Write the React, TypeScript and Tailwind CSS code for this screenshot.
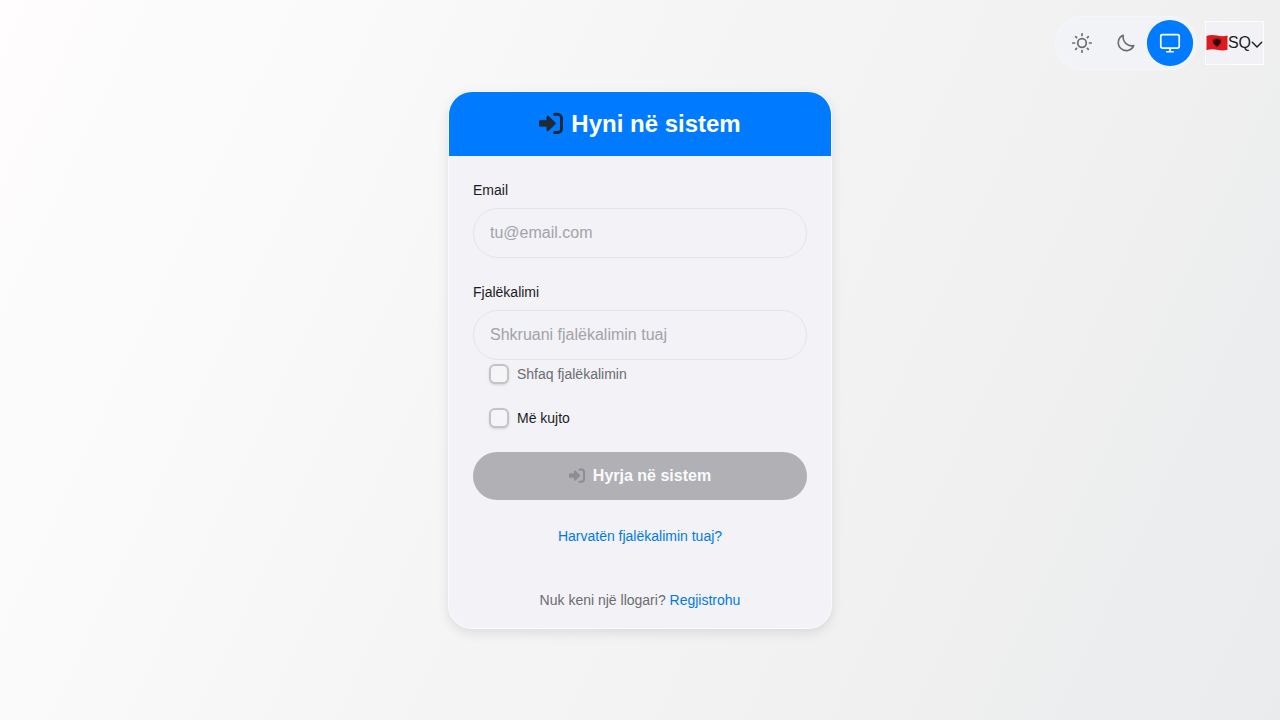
import { useState } from "react";
import type { InputHTMLAttributes } from "react";

function SignInIcon({ className }: { className: string }) {
  return (
    <svg viewBox="0 0 24 24" className={className} fill="none" aria-hidden="true">
      <path d="M15.600 2.300h2.900a4 4 0 0 1 4 4v10.200a4 4 0 0 1-4 4h-2.900" stroke="currentColor" strokeWidth="3" strokeLinecap="round" />
      <path
        d="M1.400 8.300h6.300V5.200c0-1.200 1.200-1.700 2-.9l6.500 6.300c.500.500.500 1.200 0 1.700l-6.500 6.300c-.8.800-2 .3-2-.9v-3.100H1.400c-.7 0-1.300-.6-1.300-1.300V9.600c0-.7.6-1.300 1.300-1.300z"
        fill="currentColor"
        stroke="currentColor"
        strokeWidth=".3"
      />
    </svg>
  );
}

function SunIcon() {
  return (
    <svg viewBox="0 0 24 24" className="size-6" fill="none" stroke="currentColor" strokeWidth="1.7" strokeLinecap="round" aria-hidden="true">
      <circle cx="12" cy="12" r="4.3" />
      <path d="M12 2.8v1.700M12 19.500v1.700M2.800 12h1.700M19.500 12h1.700M5.700 5.700l.9.900M17.400 17.400l.9.900M5.700 18.300l.9-.9M17.400 6.600l.9-.9" />
    </svg>
  );
}

function MoonIcon() {
  return (
    <svg viewBox="0 0 24 24" className="size-6" fill="none" stroke="currentColor" strokeWidth="1.6" strokeLinejoin="round" aria-hidden="true">
      <path d="M9.200 4.200A8 8 0 1 0 19.700 14.600C14 16 8.400 11.500 9.200 4.200z" />
    </svg>
  );
}

function MonitorIcon() {
  return (
    <svg viewBox="0 0 24 24" className="size-6" fill="none" stroke="currentColor" strokeWidth="1.6" strokeLinecap="round" strokeLinejoin="round" aria-hidden="true">
      <rect x="3.2" y="4" width="17.6" height="12.8" rx="1.6" />
      <path d="M12 17v3.300M9 20.300h6" />
    </svg>
  );
}

function ChevronIcon() {
  return (
    <svg viewBox="0 0 12 12" className="mt-1 size-3" fill="none" stroke="currentColor" strokeWidth="1.4" strokeLinecap="round" strokeLinejoin="round" aria-hidden="true">
      <path d="M1.300 3.300 6 8l4.700-4.700" />
    </svg>
  );
}

function AlbanianFlag() {
  return (
    <svg viewBox="0 0 22 18" className="h-[18px] w-[22px]" aria-hidden="true">
      <path d="M.5 2C4 .6 7.500.7 11 1.500s7 .900 10.500 0v14.200c-3.500 1-7 .8-10.500 0s-7-.800-10.500.500z" fill="#dc1a20" />
      <path d="M11 5.500 10.200 4.200 9 4.600l.7.900-.4.500L7.200 5l.2 1.600-.7.200.7 1-.5.500.8.700-.3.800.9.200-.1 1 1.200-.6-.1 1.500 1-.4.700 2.200.7-2.200 1 .4-.1-1.500 1.200.6-.1-1 .900-.2-.3-.8.800-.7-.5-.5.700-1-.7-.2.200-1.600-2.100 1-.4-.5.700-.9-1.200-.4z" fill="#2a0709" />
    </svg>
  );
}

const themes = [
  { id: "light", label: "Light", Icon: SunIcon },
  { id: "dark", label: "Dark", Icon: MoonIcon },
  { id: "system", label: "System", Icon: MonitorIcon },
];

function Toolbar() {
  const [theme, setTheme] = useState("system");
  return (
    <header className="flex items-center justify-end gap-2 px-4 pt-4">
      <div className="flex items-center rounded-full border border-white/30 bg-[#f2f3f8]/70 p-1">
        {themes.map(({ id, label, Icon }) => (
          <button
            key={id}
            type="button"
            aria-label={label}
            aria-pressed={theme === id}
            onClick={() => setTheme(id)}
            className={
              theme === id
                ? "flex size-11 scale-105 items-center justify-center rounded-full bg-[#007aff] text-white"
                : "flex size-11 items-center justify-center rounded-full text-[#6c6c70]"
            }
          >
            <Icon />
          </button>
        ))}
      </div>
      <button type="button" className="flex h-11 items-center border border-white/80 bg-[#f2f2f7]/80 text-base text-[#1c1c1e]">
        <AlbanianFlag />
        <span>SQ</span>
        <ChevronIcon />
      </button>
    </header>
  );
}

type FieldProps = InputHTMLAttributes<HTMLInputElement> & { id: string; label: string };

function Field({ id, label, ...rest }: FieldProps) {
  return (
    <div className="flex flex-col gap-2">
      <label htmlFor={id} className="text-sm text-[#1c1c1e]">
        {label}
      </label>
      <input
        id={id}
        className="h-[50px] w-full rounded-full border border-[#e3e3e8] bg-transparent px-4 text-base text-[#1c1c1e] outline-none placeholder:text-[#a3a3a8] focus:border-[#007aff]"
        {...rest}
      />
    </div>
  );
}

type CheckProps = { id: string; label: string; muted?: boolean; checked: boolean; onChange: (value: boolean) => void };

function Check({ id, label, muted, checked, onChange }: CheckProps) {
  return (
    <div className="flex items-center gap-2 pl-4">
      <input
        id={id}
        type="checkbox"
        checked={checked}
        onChange={(e) => onChange(e.target.checked)}
        className="size-5 appearance-none rounded-md border-2 border-[#c4c4c6] bg-[#f5f5f7] shadow-sm checked:border-[#007aff] checked:bg-[#007aff]"
      />
      <label htmlFor={id} className={muted ? "text-sm text-[#6c6c70]" : "text-sm text-[#1c1c1e]"}>
        {label}
      </label>
    </div>
  );
}

export default function App() {
  const [visible, setVisible] = useState(false);
  const [remember, setRemember] = useState(false);
  return (
    <div className="flex min-h-screen flex-col bg-linear-[115deg,#fffdfd_0%,#f9f9f9_25%,#f4f4f4_50%,#f0f0f0_75%,#e9ebed_100%] font-['Liberation_Sans',Arial,sans-serif]">
      <Toolbar />
      <main className="flex justify-center px-4 pt-[21px] pb-8">
        <section className="w-full max-w-96 overflow-hidden rounded-3xl border border-white/70 bg-[#f2f2f7] shadow-[0_4px_12px_rgba(0,0,0,0.1)]">
          <h1 className="flex h-16 items-center justify-center gap-2 bg-[#007aff] text-2xl font-bold text-white">
            <SignInIcon className="size-6 text-[#1f2a37]" />
            Hyni në sistem
          </h1>
          <form className="px-6 pt-6" onSubmit={(e) => e.preventDefault()}>
            <Field id="email" label="Email" type="email" placeholder="tu@email.com" />
            <div className="mt-6">
              <Field id="password" label="Fjalëkalimi" type={visible ? "text" : "password"} placeholder="Shkruani fjalëkalimin tuaj" />
            </div>
            <div className="mt-1 flex flex-col gap-6">
              <Check id="show" label="Shfaq fjalëkalimin" muted checked={visible} onChange={setVisible} />
              <Check id="remember" label="Më kujto" checked={remember} onChange={setRemember} />
              <button type="submit" disabled className="flex h-12 items-center justify-center gap-2 rounded-full bg-[#b0b0b5] text-base font-bold text-[#fafafc]">
                <SignInIcon className="size-4 text-[#8b8e92]" />
                Hyrja në sistem
              </button>
            </div>
          </form>
          <div className="flex flex-col items-center gap-11 pt-[26px] pb-[18px] text-sm">
            <a href="#forgot" className="text-[#007ae5]">Harvatën fjalëkalimin tuaj?</a>
            <p className="text-[#6c6c70]">
              Nuk keni një llogari? <a href="#register" className="text-[#007ae5]">Regjistrohu</a>
            </p>
          </div>
        </section>
      </main>
    </div>
  );
}
